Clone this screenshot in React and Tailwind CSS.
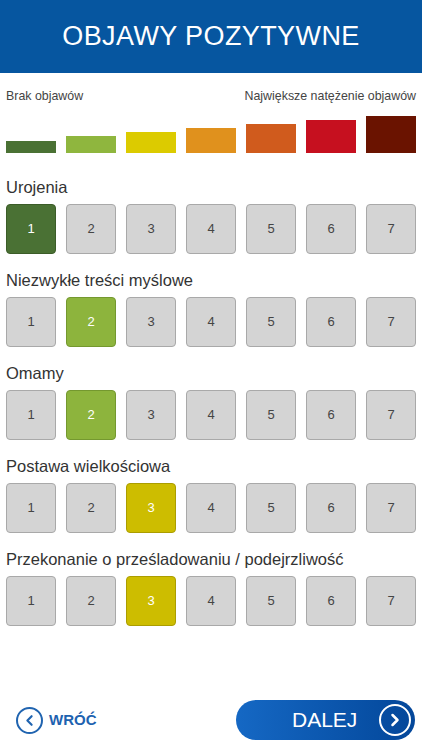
import React from "react";
import { ChevronLeft, ChevronRight } from "lucide-react";

const bars = [
  { color: "bg-[#4a7134]", h: "h-[12px]" },
  { color: "bg-[#8fb63e]", h: "h-[17px]" },
  { color: "bg-[#dccb00]", h: "h-[21px]" },
  { color: "bg-[#e0911d]", h: "h-[25px]" },
  { color: "bg-[#d05b1d]", h: "h-[29px]" },
  { color: "bg-[#c6101f]", h: "h-[33px]" },
  { color: "bg-[#6a1300]", h: "h-[37px]" },
];

const selectedStyle = {
  1: "bg-[#4a7134] border-[#3b5c28] text-white",
  2: "bg-[#8db43d] border-[#74982f] text-white",
  3: "bg-[#cdbd00] border-[#ab9d00] text-white",
};

const questions = [
  { label: "Urojenia", value: 1 },
  { label: "Niezwykłe treści myślowe", value: 2 },
  { label: "Omamy", value: 2 },
  { label: "Postawa wielkościowa", value: 3 },
  { label: "Przekonanie o prześladowaniu / podejrzliwość", value: 3 },
];

function Scale({ value }) {
  return (
    <div className="grid grid-cols-7 gap-[10px]">
      {[1, 2, 3, 4, 5, 6, 7].map((n) => (
        <div
          key={n}
          className={
            n === value
              ? "h-[50px] rounded-[4px] border flex items-center justify-center text-[13px] " +
                selectedStyle[value]
              : "h-[50px] rounded-[4px] border border-[#a9a9a9] bg-[#d4d4d4] flex items-center justify-center text-[13px] text-[#454545]"
          }
        >
          {n}
        </div>
      ))}
    </div>
  );
}

export default function App() {
  return (
    <div
      className="min-h-screen w-full bg-white flex flex-col"
      style={{ fontFamily: '"Liberation Sans", Arial, sans-serif' }}
    >
      <div className="h-[73px] bg-[#0656a0] flex items-center justify-center">
        <h1 className="text-white text-[27px] tracking-[0.4px]">OBJAWY POZYTYWNE</h1>
      </div>

      <div className="px-[6px] pt-[16px]">
        <div className="flex justify-between text-[12.4px] text-[#444] leading-[14px]">
          <span>Brak objawów</span>
          <span>Największe natężenie objawów</span>
        </div>
        <div className="grid grid-cols-7 gap-[10px] items-end h-[37px] mt-[13px]">
          {bars.map((b, i) => (
            <div key={i} className={b.color + " " + b.h}></div>
          ))}
        </div>

        <div className="mt-[23px] flex flex-col gap-[15px]">
          {questions.map((q) => (
            <div key={q.label}>
              <div className="text-[16.5px] leading-[22px] text-[#333] mb-[6px]">{q.label}</div>
              <Scale value={q.value} />
            </div>
          ))}
        </div>
      </div>

      <div className="mt-auto flex items-center justify-between pl-[16px] pr-[7px] pb-[10px]">
        <div className="flex items-center gap-[6px]">
          <div className="w-[27px] h-[27px] rounded-full border-2 border-[#2064b0] flex items-center justify-center">
            <ChevronLeft className="w-[17px] h-[17px] text-[#2064b0]" strokeWidth={3} />
          </div>
          <span className="text-[#1d62b0] font-bold text-[15px]">WRÓĆ</span>
        </div>
        <div className="relative w-[179px] h-[40px] rounded-full bg-gradient-to-r from-[#1568c4] to-[#04479a] flex items-center">
          <span className="text-white text-[21px] ml-[56px]">DALEJ</span>
          <div className="absolute right-[4px] top-[4px] w-[32px] h-[32px] rounded-full border-2 border-white flex items-center justify-center">
            <ChevronRight className="w-[20px] h-[20px] text-white" strokeWidth={3} />
          </div>
        </div>
      </div>
    </div>
  );
}
